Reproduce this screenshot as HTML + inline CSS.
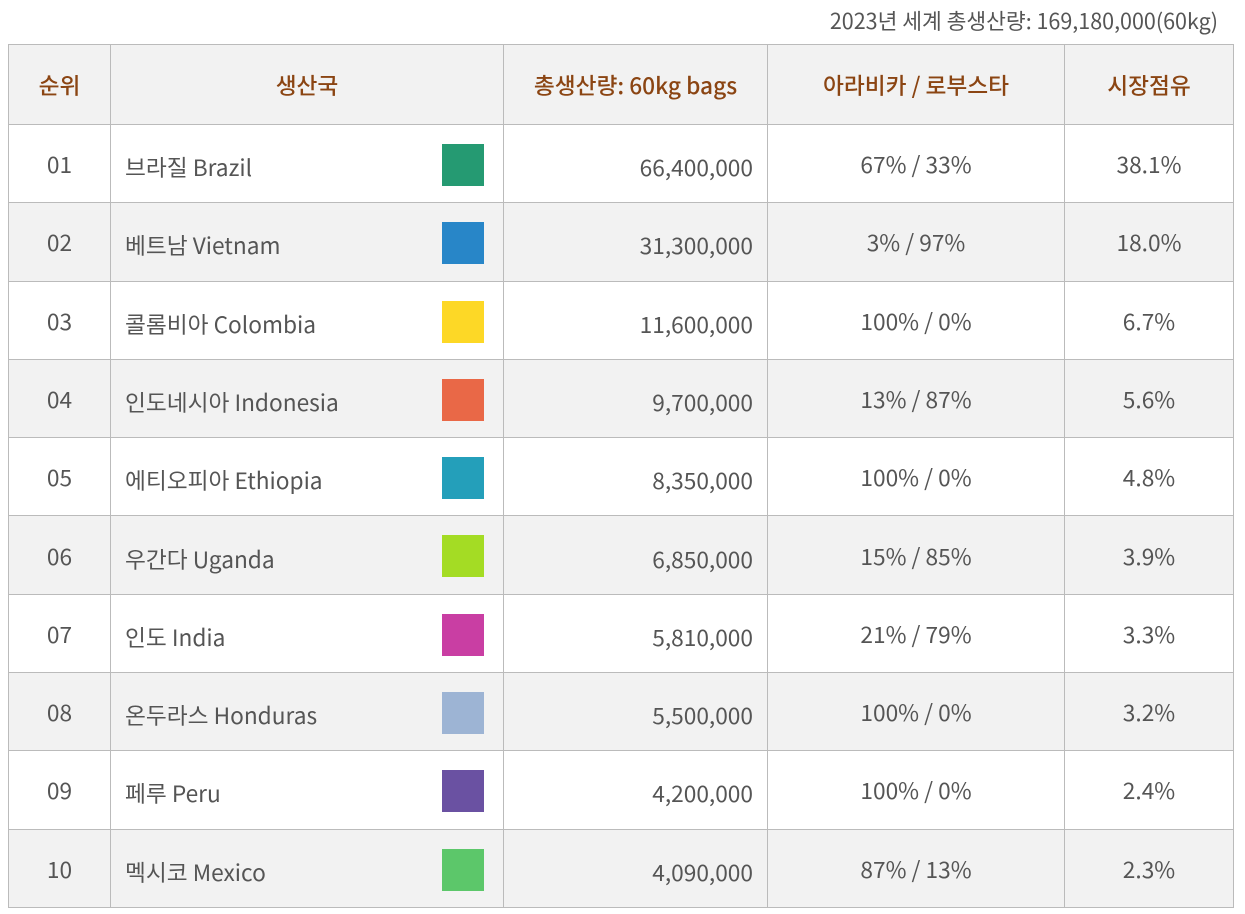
<!DOCTYPE html>
<html><head><meta charset="utf-8"><style>
body{margin:0;background:#fff;font-family:"Noto Sans CJK KR","Liberation Sans",sans-serif;}
.cap{position:absolute;right:27px;top:5px;font-size:21.5px;color:#555;}
table{position:absolute;left:8px;top:44px;border-collapse:collapse;table-layout:fixed;width:1225px;}
td,th{border:1.5px solid #bbb;font-size:22.7px;color:#555;font-weight:normal;padding:0;line-height:1.2;}
th{background:#f2f2f2;color:#8b4513;height:79px;text-align:center;font-weight:500;}
tr.g td{background:#f2f2f2;}
td{height:77.3px;}
td.c{text-align:center;}
td.n{padding-left:14px;position:relative;padding-top:6px;height:71.3px;}
td.r{text-align:right;padding-right:14px;padding-top:6px;height:71.3px;}
.sw{position:absolute;right:19px;top:19px;width:42px;height:42px;}
</style></head><body>
<div class="cap">2023년 세계 총생산량: 169,180,000(60kg)</div>
<table>
<colgroup><col style="width:102px"><col style="width:393px"><col style="width:264px"><col style="width:297px"><col style="width:169px"></colgroup>
<tr><th>순위</th><th>생산국</th><th>총생산량: 60kg bags</th><th>아라비카 / 로부스타</th><th>시장점유</th></tr>
<tr><td class="c">01</td><td class="n">브라질 Brazil<div class="sw" style="background:#259a72"></div></td><td class="r">66,400,000</td><td class="c">67% / 33%</td><td class="c">38.1%</td></tr>
<tr class="g"><td class="c">02</td><td class="n">베트남 Vietnam<div class="sw" style="background:#2886c8"></div></td><td class="r">31,300,000</td><td class="c">3% / 97%</td><td class="c">18.0%</td></tr>
<tr><td class="c">03</td><td class="n">콜롬비아 Colombia<div class="sw" style="background:#fdd826"></div></td><td class="r">11,600,000</td><td class="c">100% / 0%</td><td class="c">6.7%</td></tr>
<tr class="g"><td class="c">04</td><td class="n">인도네시아 Indonesia<div class="sw" style="background:#e96847"></div></td><td class="r">9,700,000</td><td class="c">13% / 87%</td><td class="c">5.6%</td></tr>
<tr><td class="c">05</td><td class="n">에티오피아 Ethiopia<div class="sw" style="background:#249fba"></div></td><td class="r">8,350,000</td><td class="c">100% / 0%</td><td class="c">4.8%</td></tr>
<tr class="g"><td class="c">06</td><td class="n">우간다 Uganda<div class="sw" style="background:#a4dc24"></div></td><td class="r">6,850,000</td><td class="c">15% / 85%</td><td class="c">3.9%</td></tr>
<tr><td class="c">07</td><td class="n">인도 India<div class="sw" style="background:#c93ea3"></div></td><td class="r">5,810,000</td><td class="c">21% / 79%</td><td class="c">3.3%</td></tr>
<tr class="g"><td class="c">08</td><td class="n">온두라스 Honduras<div class="sw" style="background:#9db4d4"></div></td><td class="r">5,500,000</td><td class="c">100% / 0%</td><td class="c">3.2%</td></tr>
<tr><td class="c">09</td><td class="n">페루 Peru<div class="sw" style="background:#6a51a2"></div></td><td class="r">4,200,000</td><td class="c">100% / 0%</td><td class="c">2.4%</td></tr>
<tr class="g"><td class="c">10</td><td class="n">멕시코 Mexico<div class="sw" style="background:#5cc76a"></div></td><td class="r">4,090,000</td><td class="c">87% / 13%</td><td class="c">2.3%</td></tr>
</table>
</body></html>
